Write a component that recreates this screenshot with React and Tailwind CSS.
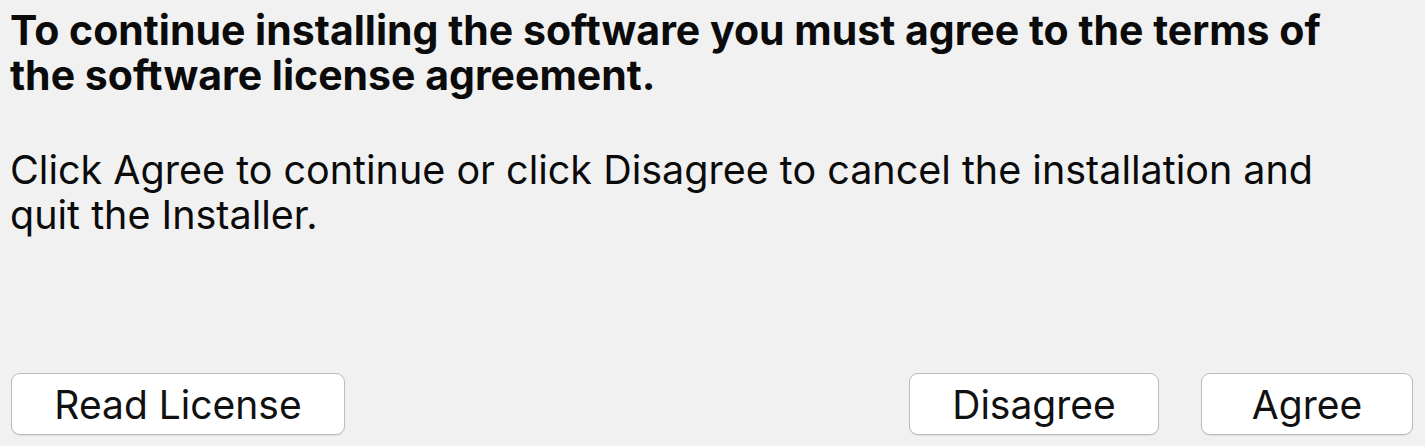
export default function App() {
  const btn =
    'h-[62px] rounded-[9px] border-[1.5px] border-[#bcbcbc] bg-white text-[39px] leading-none text-[#111] shadow-[0_1px_1px_rgba(0,0,0,0.08)] flex items-center justify-center';

  return (
    <div
      className="w-[1425px] h-[446px] bg-[#f1f1f1] flex flex-col pl-[10px] pr-[12px] pt-[8px] pb-[11px] text-[#0b0b0b]"
      style={{ fontFamily: 'Inter, "Noto Sans", sans-serif' }}
    >
      <h1 className="text-[41px] leading-[45px] font-bold whitespace-nowrap">
        To continue installing the software you must agree to the terms of
        <br />
        the software license agreement.
      </h1>
      <p className="mt-[50px] text-[39.5px] leading-[45px] whitespace-nowrap">
        Click Agree to continue or click Disagree to cancel the installation and
        <br />
        quit the Installer.
      </p>
      <div className="mt-auto flex items-end">
        <button className={`${btn} ml-[1px] w-[334px]`}>Read License</button>
        <div className="ml-auto flex gap-[42px]">
          <button className={`${btn} w-[250px]`}>Disagree</button>
          <button className={`${btn} w-[212px]`}>Agree</button>
        </div>
      </div>
    </div>
  );
}
